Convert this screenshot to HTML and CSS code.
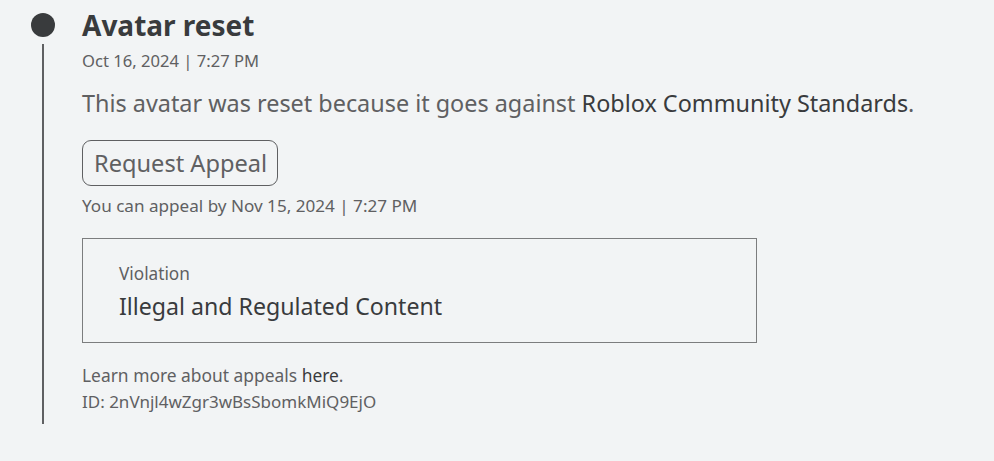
FILE: index.html
```html
<!DOCTYPE html>
<html>
<head>
<meta charset="utf-8">
<link rel="stylesheet" href="styles.css">
</head>
<body>
<div class="entry">
  <div class="rail">
    <div class="dot"></div>
    <div class="line"></div>
  </div>
  <div class="content">
    <h1 class="title">Avatar reset</h1>
    <div class="date">Oct 16, 2024 | 7:27 PM</div>
    <p class="desc">This avatar was reset because it goes against <span class="strong">Roblox Community Standards</span>.</p>
    <button class="appeal">Request Appeal</button>
    <div class="deadline">You can appeal by Nov 15, 2024 | 7:27 PM</div>
    <div class="violation">
      <div class="v-label">Violation</div>
      <div class="v-value">Illegal and Regulated Content</div>
    </div>
    <div class="learn">Learn more about appeals <span class="strong">here</span>.</div>
    <div class="id">ID: 2nVnjl4wZgr3wBsSbomkMiQ9EjO</div>
  </div>
</div>
</body>
</html>
```

FILE: styles.css
```css
html, body {
  margin: 0;
  padding: 0;
  background: #f2f4f5;
  font-family: "Noto Sans", "Open Sans", sans-serif;
  color: #5f6062;
}
.entry {
  display: flex;
  padding: 8px 0 0 31px;
  gap: 27px;
}
.rail {
  width: 24px;
  display: flex;
  flex-direction: column;
  align-items: center;
}
.dot {
  width: 24px;
  height: 24px;
  margin-top: 5px;
  border-radius: 50%;
  background: #393b3d;
}
.line {
  width: 2px;
  height: 380px;
  margin-top: 7px;
  background: #5f6062;
}
.content {
  display: flex;
  flex-direction: column;
  align-items: flex-start;
}
.title {
  margin: 0;
  font-size: 28px;
  line-height: 34px;
  font-weight: 700;
  color: #393b3d;
}
.date {
  margin-top: 9px;
  font-size: 16.6px;
  line-height: 20px;
}
.desc {
  margin: 17px 0 0;
  font-size: 23.4px;
  line-height: 30px;
}
.strong {
  color: #393b3d;
}
.appeal {
  margin-top: 22px;
  height: 46px;
  padding: 0 10px 0 11px;
  border: 1px solid #5f6062;
  border-radius: 9px;
  background: transparent;
  font-family: inherit;
  font-size: 23.6px;
  color: #5f6062;
}
.deadline {
  margin-top: 10px;
  font-size: 17.1px;
  line-height: 20px;
}
.violation {
  box-sizing: border-box;
  margin-top: 22px;
  width: 675px;
  height: 105px;
  border: 1px solid #7c7d7e;
  padding: 25px 36px 0;
}
.v-label {
  font-size: 17.2px;
  line-height: 20px;
}
.v-value {
  margin-top: 8px;
  font-size: 23.15px;
  line-height: 28px;
  color: #393b3d;
}
.learn {
  margin-top: 22px;
  font-size: 17.4px;
  line-height: 20px;
}
.id {
  margin-top: 7px;
  font-size: 17px;
  line-height: 20px;
}
```
